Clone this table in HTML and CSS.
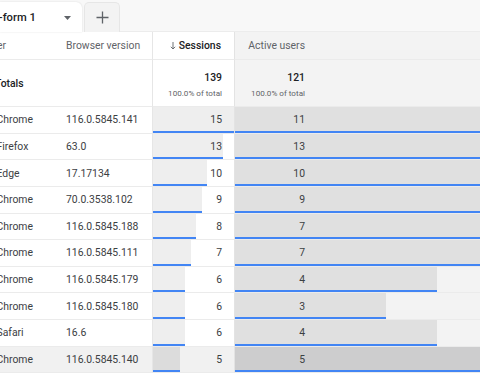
FILE: index.html
```html
<!DOCTYPE html>
<html>
<head>
<meta charset="utf-8">
<link rel="stylesheet" href="styles.css">
</head>
<body>
<div class="page">
  <div class="tabs">
    <div class="tab tab-active">
      <span class="tab-label">Free-form 1</span>
      <svg class="caret" width="7" height="4" viewBox="0 0 7 4"><path d="M0 0h7L3.5 4z" fill="#5f6368"/></svg>
    </div>
    <div class="tab tab-add">
      <svg width="13" height="13" viewBox="0 0 13 13"><path d="M6.5 0.5v12M0.5 6.5h12" stroke="#5f6368" stroke-width="1.3" fill="none"/></svg>
    </div>
    <div class="tab-rest"></div>
  </div>

  <div class="grid">
    <div class="cell hd dim1"><span class="hd-clip">Browser</span></div>
    <div class="cell hd dim2">Browser version</div>
    <div class="cell hd m1 sorted"><svg class="arrow" width="6" height="8" viewBox="0 0 6 8"><path d="M3 0v7M0.8 4.8L3 7l2.2-2.2" stroke="#5f6368" stroke-width="0.9" fill="none"/></svg>Sessions</div>
    <div class="cell hd m2"><span class="m2-num">Active users</span></div>

    <div class="cell tot dim1"><span class="clip clip-tot strong">Totals</span></div>
    <div class="cell tot dim2"></div>
    <div class="cell tot m1"><div class="totbox"><span class="totnum">139</span><span class="totpct">100.0% of total</span></div></div>
    <div class="cell tot m2"><div class="totbox m2-tot"><span class="totnum">121</span><span class="totpct">100.0% of total</span></div></div>

    <div class="cell dim1"><span class="clip">Chrome</span></div>
    <div class="cell dim2">116.0.5845.141</div>
    <div class="cell m1"><div class="bar" style="width:81px"></div><span class="num">15</span></div>
    <div class="cell m2"><div class="bar" style="width:556px"></div><span class="num m2-num">11</span></div>

    <div class="cell dim1"><span class="clip">Firefox</span></div>
    <div class="cell dim2">63.0</div>
    <div class="cell m1"><div class="bar" style="width:70px"></div><span class="num">13</span></div>
    <div class="cell m2"><div class="bar" style="width:656px"></div><span class="num m2-num">13</span></div>

    <div class="cell dim1"><span class="clip">Edge</span></div>
    <div class="cell dim2">17.17134</div>
    <div class="cell m1"><div class="bar" style="width:54px"></div><span class="num">10</span></div>
    <div class="cell m2"><div class="bar" style="width:505px"></div><span class="num m2-num">10</span></div>

    <div class="cell dim1"><span class="clip">Chrome</span></div>
    <div class="cell dim2">70.0.3538.102</div>
    <div class="cell m1"><div class="bar" style="width:48.6px"></div><span class="num">9</span></div>
    <div class="cell m2"><div class="bar" style="width:455px"></div><span class="num m2-num">9</span></div>

    <div class="cell dim1"><span class="clip">Chrome</span></div>
    <div class="cell dim2">116.0.5845.188</div>
    <div class="cell m1"><div class="bar" style="width:43.2px"></div><span class="num">8</span></div>
    <div class="cell m2"><div class="bar" style="width:354px"></div><span class="num m2-num">7</span></div>

    <div class="cell dim1"><span class="clip">Chrome</span></div>
    <div class="cell dim2">116.0.5845.111</div>
    <div class="cell m1"><div class="bar" style="width:37.8px"></div><span class="num">7</span></div>
    <div class="cell m2"><div class="bar" style="width:354px"></div><span class="num m2-num">7</span></div>

    <div class="cell dim1"><span class="clip">Chrome</span></div>
    <div class="cell dim2">116.0.5845.179</div>
    <div class="cell m1"><div class="bar" style="width:32.4px"></div><span class="num">6</span></div>
    <div class="cell m2"><div class="bar" style="width:202px"></div><span class="num m2-num">4</span></div>

    <div class="cell dim1"><span class="clip">Chrome</span></div>
    <div class="cell dim2">116.0.5845.180</div>
    <div class="cell m1"><div class="bar" style="width:32.4px"></div><span class="num">6</span></div>
    <div class="cell m2"><div class="bar" style="width:151px"></div><span class="num m2-num">3</span></div>

    <div class="cell dim1"><span class="clip">Safari</span></div>
    <div class="cell dim2">16.6</div>
    <div class="cell m1"><div class="bar" style="width:32.4px"></div><span class="num">6</span></div>
    <div class="cell m2"><div class="bar" style="width:202px"></div><span class="num m2-num">4</span></div>

    <div class="cell dim1 hover"><span class="clip">Chrome</span></div>
    <div class="cell dim2 hover">116.0.5845.140</div>
    <div class="cell m1 hover"><div class="bar" style="width:27px"></div><span class="num">5</span></div>
    <div class="cell m2 hover"><div class="bar" style="width:253px"></div><span class="num m2-num">5</span></div>
  </div>
</div>
</body>
</html>
```

FILE: styles.css
```css
* { box-sizing: border-box; }
html, body {
  margin: 0;
  padding: 0;
  background: #ffffff;
  overflow: hidden;
}
body {
  font-family: Roboto, "Liberation Sans", sans-serif;
  color: #3c4043;
  width: 480px;
  height: 384px;
}
.page {
  width: 480px;
  height: 384px;
  overflow: hidden;
}
.tabs {
  display: flex;
  align-items: flex-end;
  height: 32px;
  background: #f8f8f8;
}
.tab {
  height: 30px;
  display: flex;
  align-items: center;
}
.tab-active {
  width: 82px;
  background: #ffffff;
  border-top-right-radius: 6px;
  box-shadow: 0 0 2px rgba(0,0,0,0.12);
  position: relative;
  z-index: 1;
  padding-right: 11px;
  justify-content: space-between;
  overflow: hidden;
}
.tab-label {
  font-size: 11.2px;
  font-weight: 500;
  color: #202124;
  margin-left: -23px;
  white-space: nowrap;
}
.caret { margin-top: 1px; }
.tab-add {
  width: 36px;
  margin-left: 2px;
  background: #f3f3f3;
  border: 1px solid #e6e6e6;
  border-bottom: none;
  border-radius: 5px 5px 0 0;
  justify-content: center;
}
.tab-rest {
  flex: 1;
  height: 1px;
  background: #ececec;
}

.grid {
  display: grid;
  grid-template-columns: 58px 94px 83px 245px;
  grid-template-rows: 28px 47px repeat(10, 26.63px);
  font-size: 10.4px;
}
.cell {
  border-bottom: 1px solid #ebebeb;
  min-width: 0;
  overflow: hidden;
  white-space: nowrap;
}
.dim1, .dim2 {
  display: flex;
  align-items: center;
}
.dim2 { padding-left: 8px; }
.clip { margin-left: -3.5px; }
.clip-tot { margin-left: -5px; }
.hd-clip { margin-left: -32px; }
.strong { font-weight: 500; color: #202124; }

.hd { color: #5f6368; }
.hd.m1 {
  display: flex;
  align-items: center;
  justify-content: flex-end;
  padding-right: 13px;
  font-weight: 500;
  color: #202124;
}
.arrow { margin-right: 3px; margin-top: 0; }
.hd.m2 { display: flex; align-items: center; }

.m1 {
  border-left: 1px solid #e6e6e6;
  border-right: 1px solid #e3e3e3;
  display: grid;
  grid-template: 1fr / 1fr;
}
.m2 {
  background: #f3f3f3;
  display: grid;
  grid-template: 1fr / 1fr;
}
.hd.m1, .hd.m2 { display: flex; }

.bar {
  grid-area: 1 / 1;
  justify-self: start;
  align-self: stretch;
  background: #eeeeee;
  border-bottom: 2px solid #4285f4;
}
.m2 .bar { background: #e0e0e0; }
.num {
  grid-area: 1 / 1;
  align-self: center;
  justify-self: end;
  padding-right: 12px;
  position: relative;
  font-size: 10.4px;
}
.m2-num {
  display: block;
  width: 70px;
  text-align: right;
  justify-self: start;
  padding-right: 0;
}

.totbox {
  grid-area: 1 / 1;
  display: flex;
  flex-direction: column;
  align-items: flex-end;
  padding-right: 12px;
  padding-top: 11px;
}
.m2-tot { width: 70px; padding-right: 0; justify-self: start; }
.totnum {
  font-weight: 500;
  color: #202124;
  font-size: 10.4px;
}
.totpct {
  font-size: 8.1px;
  color: #5f6368;
  margin-top: 4px;
}

.hover { background: #f1f1f1; }
.m1.hover .bar { background: #dcdcdc; }
.m2.hover .bar { background: #cdcdce; }
```
